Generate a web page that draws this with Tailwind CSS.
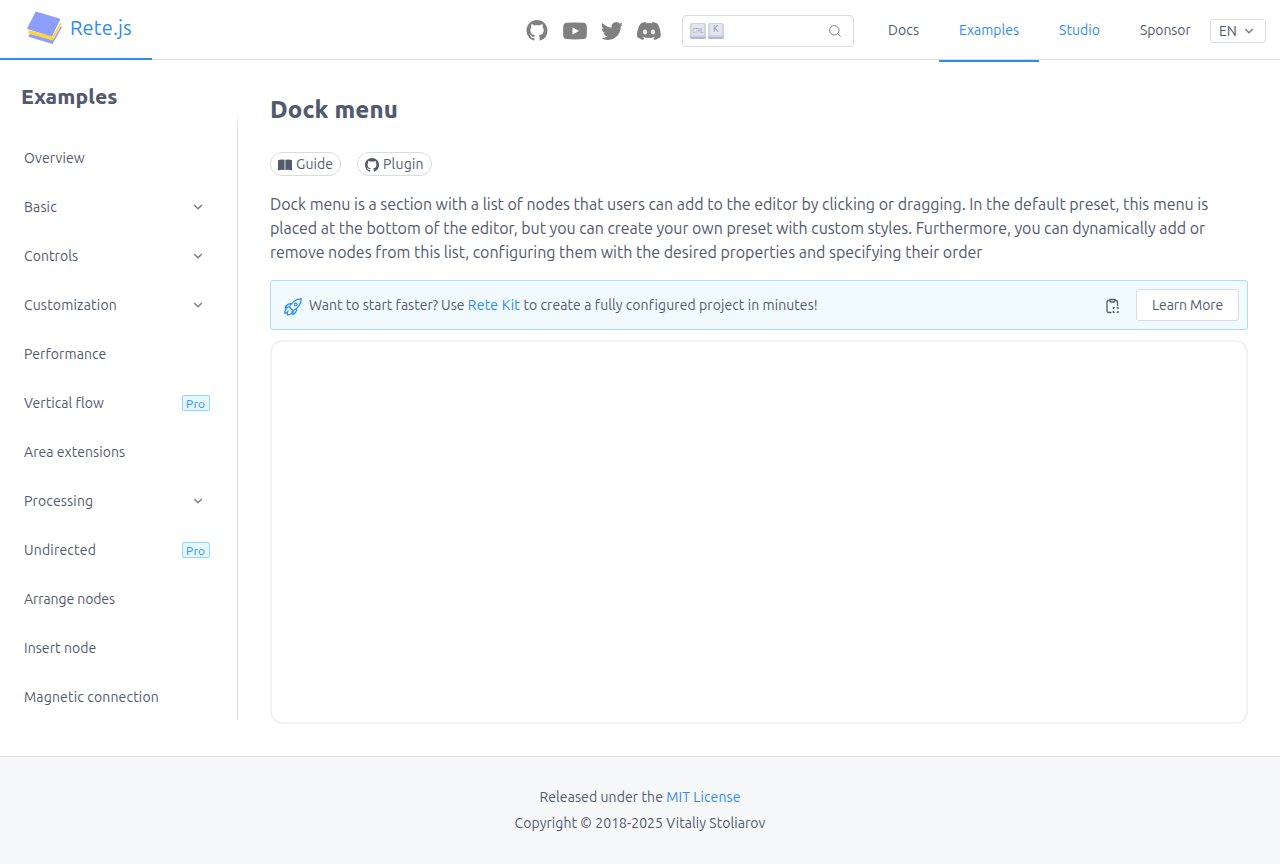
<!DOCTYPE html>
<html lang="en">
<head>
<meta charset="utf-8">
<title>Dock menu - Rete.js</title>
<script src="https://cdn.jsdelivr.net/npm/@tailwindcss/browser@4"></script>
</head>
<body class="h-[864px] overflow-hidden bg-white font-[Ubuntu,'Noto_Sans',sans-serif] text-sm text-[#515a6e]">
<svg class="hidden">
  <symbol id="github" viewBox="0 0 16 16"><path d="M8 0C3.58 0 0 3.58 0 8c0 3.54 2.29 6.53 5.47 7.59.4.07.55-.17.55-.38 0-.19-.01-.82-.01-1.49-2.01.37-2.53-.49-2.69-.94-.09-.23-.48-.94-.82-1.13-.28-.15-.68-.52-.01-.53.63-.01 1.08.58 1.23.82.72 1.21 1.87.87 2.33.66.07-.52.28-.87.51-1.07-1.78-.2-3.64-.89-3.64-3.95 0-.87.31-1.59.82-2.15-.08-.2-.36-1.02.08-2.12 0 0 .67-.21 2.2.82a7.6 7.6 0 0 1 4 0c1.53-1.04 2.2-.82 2.2-.82.44 1.1.16 1.92.08 2.12.51.56.82 1.27.82 2.15 0 3.07-1.87 3.75-3.65 3.95.29.25.54.73.54 1.48 0 1.07-.01 1.93-.01 2.2 0 .21.15.46.55.38A8 8 0 0 0 16 8c0-4.42-3.58-8-8-8z"/></symbol>
  <symbol id="chev" viewBox="0 0 12 12"><path d="M2.200 4L6 7.800L9.800 4" fill="none" stroke="#808080" stroke-width="1.500"/></symbol>
</svg>
<header class="flex h-[60px] border-b border-[#dcdcdc]">
  <a class="flex h-[60px] w-[152px] shrink-0 border-b-2 border-[#2d8cf0] pl-[26px] text-[#2d8cf0]">
    <svg class="mt-[11px] h-[34px] w-[37px]" viewBox="0 0 37 34"><path d="M3 23.500L5 23l22 6 8-14 1 1.200-9.500 16.800L2.500 25.800z" fill="#8e9eff"/><path d="M2.500 19l24 6.500L34 12l1.500 1-8.800 16.500L2.500 22.500z" fill="#ffd72f"/><path d="M9.500 1Q10 .6 11 .8L33.500 7.500q1 .5.500 1.500L26.500 24.500q-.5 1-1.500.700L1.800 18.200Q.800 17.800 1.300 17z" fill="#8e9eff"/></svg>
    <span class="ml-[7px] mt-[13px] h-[30px] text-xl leading-[30px] tracking-[0.14px]">Rete.js</span>
  </a>
  <div class="ml-auto flex items-start text-[#808080]">
    <svg class="mt-5 h-[21px] w-[22px] fill-[#808080]"><use href="#github"/></svg>
    <svg class="ml-[15px] mt-[22px] h-[18px] w-6" viewBox="0 0 24 18" fill="#808080"><path fill-rule="evenodd" d="M3.500.7Q12 .1 20.500.7 23.400 1 23.700 4q.4 5 0 10-.3 2.800-3.200 3.100-8.500.6-17 0Q.6 16.800.3 14q-.4-5 0-10Q.6 1 3.500.7zM9.500 5.200v7.400L16 8.900z"/></svg>
    <svg class="ml-3.5 mt-5 h-[22px] w-[22px]" viewBox="0 0 24 24" fill="#808080"><path d="M23.950 4.570a10 10 0 0 1-2.820.77 4.960 4.960 0 0 0 2.160-2.720c-.95.55-2 .95-3.130 1.180a4.920 4.920 0 0 0-8.380 4.480C7.690 8.090 4.070 6.130 1.640 3.160a4.820 4.820 0 0 0-.67 2.480c0 1.710.87 3.210 2.190 4.100a4.900 4.900 0 0 1-2.230-.62v.06a4.920 4.920 0 0 0 3.950 4.830 5 5 0 0 1-2.210.08 4.940 4.940 0 0 0 4.600 3.420A9.870 9.870 0 0 1 0 19.540a14 14 0 0 0 7.550 2.210c9.050 0 14-7.500 14-13.980 0-.21 0-.42-.02-.63a9.940 9.940 0 0 0 2.420-2.570z"/></svg>
    <svg class="ml-3.5 mt-[22px] h-[18px] w-6" viewBox="0 2.800 24 18.400" preserveAspectRatio="none" fill="#808080"><path d="M20.317 4.370a19.790 19.790 0 0 0-4.885-1.515c-.21.375-.444.864-.608 1.250a18.270 18.270 0 0 0-5.487 0 12.600 12.600 0 0 0-.617-1.250A19.740 19.740 0 0 0 3.677 4.370C.533 9.046-.320 13.580.099 18.058a19.900 19.900 0 0 0 5.993 3.030c.462-.63.874-1.295 1.226-1.994a13 13 0 0 1-1.872-.892l.372-.292c3.928 1.793 8.180 1.793 12.062 0l.373.292a12.300 12.300 0 0 1-1.873.892c.36.698.772 1.362 1.225 1.993a19.840 19.840 0 0 0 6.002-3.030c.5-5.177-.838-9.674-3.290-13.687zM8.020 15.330c-1.183 0-2.157-1.085-2.157-2.419s.955-2.419 2.157-2.419 2.176 1.096 2.157 2.420c0 1.333-.956 2.418-2.157 2.418zm7.975 0c-1.183 0-2.157-1.085-2.157-2.419s.955-2.419 2.157-2.419 2.176 1.096 2.157 2.420c0 1.333-.946 2.418-2.157 2.418z"/></svg>
  </div>
  <div class="ml-[21px] mt-[15px] flex h-8 w-[172px] shrink-0 items-center rounded border border-[#dcdcdc] pl-[7px] pr-3">
    <svg class="h-4 w-[35px]" viewBox="0 0 35 16"><g id="key"><rect x="0" y="1" width="16" height="15" rx="2" fill="#b3b3d6"/><rect x="0" y="0" width="16" height="14" rx="2" fill="#cfd4e2"/><rect x="2" y="1" width="12" height="11" rx="1" fill="#e2e6ee"/></g><use href="#key" x="18"/><text x="2.500" y="9.800" font-size="8" textLength="11" lengthAdjust="spacingAndGlyphs" fill="#8d97aa">CTRL</text><text x="23" y="9.300" font-size="9" fill="#8d97aa">K</text></svg>
    <svg class="ml-auto h-3 w-3" viewBox="0 0 12 12" fill="none" stroke="#808080"><circle cx="5.300" cy="5.300" r="4.700"/><path d="M8.700 8.700l2.800 2.800"/></svg>
  </div>
  <nav class="ml-3.5 flex shrink-0 leading-[60px]">
    <a class="h-[62px] w-[71px] pl-5 tracking-[0.1px]">Docs</a>
    <a class="h-[62px] w-[100px] border-b-2 border-[#2d8cf0] pl-5 text-[#2d8cf0]">Examples</a>
    <a class="w-[81px] pl-5 tracking-[0.08px] text-[#2d8cf0]">Studio</a>
    <a class="w-[90px] pl-5 tracking-[-0.1px]">Sponsor</a>
  </nav>
  <div class="mr-3.5 mt-[19px] flex h-6 w-14 shrink-0 items-center rounded-[3px] border border-[#dcdcdc] pl-2 leading-[22px]">EN<svg class="mb-px ml-auto mr-2.5 h-3 w-3"><use href="#chev"/></svg></div>
</header>
<div class="flex h-[696px]">
  <aside class="flex w-[238px] shrink-0 flex-col">
    <h2 class="mt-5 h-[33px] pl-[21px] text-[21px] font-extrabold leading-8 tracking-[0.1px]">Examples</h2>
    <div class="flex h-[607px] border-r border-[#dcdcdc] pt-5 [border-image:linear-gradient(to_bottom,transparent,#dcdcdc_18px)_1]">
      <ul class="w-full pl-6 [&>li]:flex [&>li]:h-[49px] [&>li]:items-center [&_svg]:ml-auto [&_svg]:mr-[33px] [&_svg]:size-3">
        <li class="tracking-[0.12px]">Overview</li>
        <li class="tracking-[0.15px]">Basic<svg><use href="#chev"/></svg></li>
        <li class="tracking-[0.07px]">Controls<svg><use href="#chev"/></svg></li>
        <li class="tracking-[0.2px]">Customization<svg><use href="#chev"/></svg></li>
        <li class="tracking-[0.09px]">Performance</li>
        <li class="tracking-[0.08px]">Vertical flow<span class="ml-auto mr-[27px] h-4 w-7 rounded-xs border border-[#91d5ff] bg-[#e6f7ff] pl-[3px] text-xs leading-[15px] tracking-[0.2px] text-[#1890ff]">Pro</span></li>
        <li class="tracking-[0.06px]">Area extensions</li>
        <li class="tracking-[0.16px]">Processing<svg><use href="#chev"/></svg></li>
        <li class="tracking-[0.2px]">Undirected<span class="ml-auto mr-[27px] h-4 w-7 rounded-xs border border-[#91d5ff] bg-[#e6f7ff] pl-[3px] text-xs leading-[15px] tracking-[0.2px] text-[#1890ff]">Pro</span></li>
        <li class="tracking-[-0.08px]">Arrange nodes</li>
        <li class="tracking-[0.07px]">Insert node</li>
        <li class="tracking-[0.17px]">Magnetic connection</li>
      </ul>
    </div>
  </aside>
  <main class="ml-8 w-[978px] shrink-0">
    <h1 class="mt-8 h-9 text-2xl font-extrabold leading-9 tracking-[0.12px]">Dock menu</h1>
    <div class="mt-6 flex h-6 gap-4 leading-[22px]">
      <a class="flex w-[71px] items-center rounded-full border border-[#dcdcdc] pl-[7px] tracking-[0.1px]"><svg class="mr-1 mt-0.5 h-3 w-3.5 fill-[#515a6e]" viewBox="0 0 14 12"><path d="M0 1.200Q3-.2 6.600.8v10.200Q3 10.300 0 11.500zM7.400.8Q11-.2 14 1.200v10.300Q11 10.300 7.400 11z"/></svg>Guide</a>
      <a class="flex w-[75px] items-center rounded-full border border-[#dcdcdc] pl-[7px] tracking-[0.2px]"><svg class="mr-1 mt-0.5 h-3.5 w-3.5 fill-[#515a6e]"><use href="#github"/></svg>Plugin</a>
    </div>
    <p class="mt-4 whitespace-nowrap text-base leading-6"><span class="tracking-[-0.032px]">Dock menu is a section with a list of nodes that users can add to the editor by clicking or dragging. In the default preset, this menu is</span><br><span class="tracking-[-0.046px]">placed at the bottom of the editor, but you can create your own preset with custom styles. Furthermore, you can dynamically add or</span><br><span class="tracking-[-0.03px]">remove nodes from this list, configuring them with the desired properties and specifying their order</span></p>
    <div class="mt-4 flex h-[50px] items-center rounded-[3px] border border-[#abdcff] bg-[#f0faff] pl-[13px] pr-2">
      <svg class="mt-1 h-[18px] w-[18px]" viewBox="0 0 18 18" fill="none" stroke="#2d8cf0" stroke-width="1.200" stroke-linejoin="round"><path d="M17.300.8Q9.500 1 5.300 9l3.900 3.800Q17 8.500 17.300.8z"/><circle cx="11.600" cy="6.500" r="1.400"/><path d="M7.300 5.600Q3.500 5.300 1.300 9.400l4-.400M12.500 10.800Q12.800 14.600 8.800 16.900l.4-4.100M3.500 9.400Q.6 11 .8 15.500l2-1M4.300 12.500Q3 14 3.300 17q2.500-.2 3.900-1.200l1.300-2.900"/></svg>
      <span class="ml-[7px] whitespace-nowrap tracking-[0.078px]"><span class="tracking-[0.025px]">Want to start faster? Use </span><a class="tracking-[0.22px] text-[#2d8cf0]">Rete Kit</a> to create a fully configured project in minutes!</span>
      <svg class="ml-auto mr-[17px] mt-0.5 h-4 w-3.5" viewBox="0 0 14 16" fill="none" stroke="#515a6e" stroke-width="1.300"><path d="M4.500 2.500H3.500Q2 2.500 2 4v9Q2 14.500 3.500 14.500H6.500M10.500 2.500h.5q1.500 0 1.500 1.500v4M5 1.500h5v1q0 1.500-1.500 1.500h-2Q5 4 5 2.500z"/><path d="M9.700 9.700H8.400V11M11.700 9.700H13V11M8.400 13v1.400h1.300M13 13v1.400h-1.300"/></svg>
      <a class="h-8 w-[103px] rounded-[3px] border border-[#dcdcdc] bg-white pl-[15px] leading-[30px] tracking-[-0.08px]">Learn More</a>
    </div>
    <div class="mt-2.5 h-96 rounded-xl border-2 border-[#f2f2f2]"></div>
  </main>
</div>
<footer class="h-[108px] border-t border-[#dcdee2] bg-[#f5f7f9] pt-[27px] text-center leading-[26px]">
  <p class="tracking-[0.09px]">Released under the <a class="text-[#2d8cf0]">MIT License</a></p>
  <p class="tracking-[0.07px]">Copyright © 2018-2025 Vitaliy Stoliarov</p>
</footer>
</body>
</html>
